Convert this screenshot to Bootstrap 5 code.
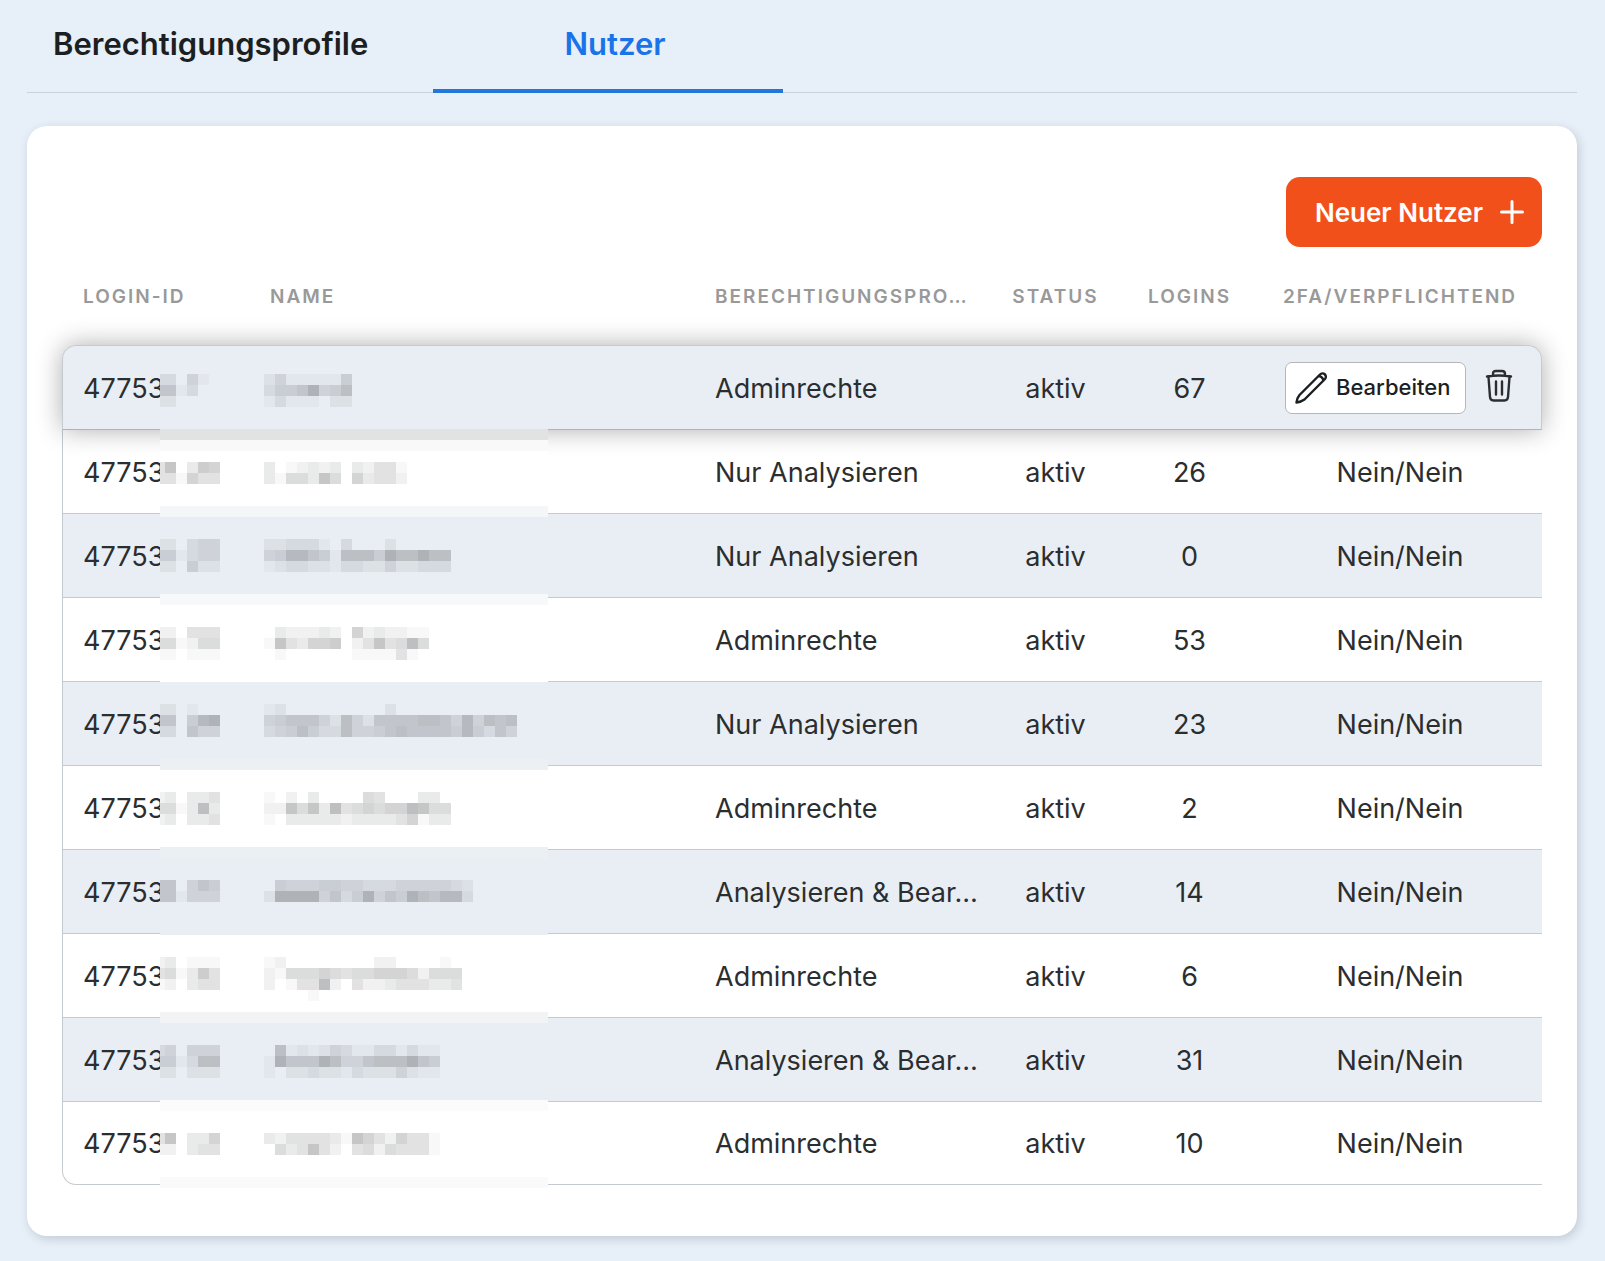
<!DOCTYPE html>
<html lang="de">
<head>
<meta charset="utf-8">
<meta name="viewport" content="width=device-width, initial-scale=1">
<title>Nutzer</title>
<link href="https://cdn.jsdelivr.net/npm/bootstrap@5.3.0/dist/css/bootstrap.min.css" rel="stylesheet">
<style>
  body { background: #e7eff8; color: #2b2e30; font-family: Inter, "Liberation Sans", sans-serif; font-size: 27px; }
  .page-shell { padding: 0 28px 24px 27px; }
  .profile-tabs { height: 93px; border-bottom: 1px solid #c9d1da; margin-bottom: 33px; }
  .profile-tabs .nav-link { height: 93px; padding: 20px 0 0; font-size: 31px; line-height: 48px; font-weight: 600; color: #1c1f21; border-bottom: 4px solid transparent; border-radius: 0; }
  .profile-tabs .nav-link.active { color: #1a73e8; border-bottom-color: #2376dc; }
  .tab-wide { width: 406px; }
  .profile-tabs .tab-wide .nav-link { padding-left: 26px; }
  .tab-user { width: 350px; }
  .profile-tabs .tab-user .nav-link { padding-left: 14px; }
  .user-panel { border: 0; border-radius: 20px; padding: 51px 35px; box-shadow: 2px 3px 10px rgba(60, 80, 100, .22); }
  .btn-create { height: 70px; padding: 0 16px 0 28px; border-radius: 14px; background: #f2501b; color: #fff; font-size: 26px; font-weight: 600; }
  .btn-create:hover { background: #dc4514; color: #fff; }
  .user-grid { table-layout: fixed; border-collapse: separate; border-spacing: 0; }
  .user-grid th { height: 98px; padding: 2px 16px 0; vertical-align: middle; font-size: 19px; font-weight: 600; letter-spacing: 2px; color: #999; }
  .user-grid td { height: 84px; padding: 3px 16px 0; border-bottom: 1px solid #c4cacf; vertical-align: middle; }
  .user-grid .cell-start { padding-left: 22px; padding-right: 22px; }
  .user-grid td.cell-start { padding-right: 0; }
  .user-grid th:first-child { padding-left: 21px; }
  .user-grid td:first-child { border-left: 1px solid #c4cacf; padding-left: 20px; }
  .user-grid tbody tr:nth-child(odd) td { background: #e9eef4; }
  .row-raised { position: relative; z-index: 1; border-radius: 14px 14px 0 0; box-shadow: 0 0 26px rgba(0, 0, 0, .32); }
  .user-grid .row-raised td { border-top: 1px solid #c4cacf; border-bottom-color: #adb3b6; height: 85px; }
  .row-raised td:first-child { border-top-left-radius: 14px; position: relative; }
  .user-grid .row-raised td:last-child { border-top-right-radius: 14px; border-right: 1px solid #c4cacf; padding: 0 27px; }
  .user-grid tbody tr:last-child td { height: 83px; }
  .user-grid tbody tr:last-child td:first-child { border-bottom-left-radius: 14px; }
  .redaction { position: absolute; left: 97px; top: 0; pointer-events: none; }
  .btn-edit { height: 52px; padding: 0 15px 0 8px; background: #fff; border: 1px solid #b3b7ba; border-radius: 7px; font-size: 22px; font-weight: 500; color: #1c1f21; }
  .w-login { width: 186px; } .w-profile { width: 297px; } .w-status { width: 131px; } .w-logins { width: 137px; } .w-twofa { width: 284px; }
</style>
<script src="https://cdn.jsdelivr.net/npm/bootstrap@5.3.0/dist/js/bootstrap.bundle.min.js"></script>
</head>
<body>
<div class="page-shell">
  <ul class="nav profile-tabs">
    <li class="nav-item tab-wide"><a class="nav-link" href="#profile">Berechtigungsprofile</a></li>
    <li class="nav-item tab-user"><a class="nav-link active text-center" aria-current="page" href="#nutzer">Nutzer</a></li>
  </ul>
  <main class="card user-panel">
    <div class="d-flex justify-content-end">
      <button type="button" class="btn btn-create d-flex align-items-center gap-3">Neuer Nutzer
        <svg width="26" height="26" viewBox="0 0 26 26" fill="none" stroke="#fff" stroke-width="3" stroke-linecap="round" aria-hidden="true"><path d="M13 2.500v21M2.500 13h21"/></svg>
      </button>
    </div>
    <table class="user-grid w-100">
      <colgroup><col class="w-login"><col><col class="w-profile"><col class="w-status"><col class="w-logins"><col class="w-twofa"></colgroup>
      <thead>
        <tr>
          <th scope="col" class="cell-start text-nowrap">LOGIN-ID</th>
          <th scope="col" class="cell-start">NAME</th>
          <th scope="col" class="cell-start text-nowrap">BERECHTIGUNGSPRO…</th>
          <th scope="col" class="text-center text-nowrap">STATUS</th>
          <th scope="col" class="text-center text-nowrap">LOGINS</th>
          <th scope="col" class="text-center text-nowrap">2FA/VERPFLICHTEND</th>
        </tr>
      </thead>
      <tbody>
        <tr class="row-raised">
          <td class="cell-start">47753<svg class="redaction" id="redaction" width="388" height="842" viewBox="160 346 388 842" shape-rendering="crispEdges" aria-hidden="true"></svg></td>
          <td></td><td class="cell-start text-nowrap">Adminrechte</td><td class="text-center">aktiv</td><td class="text-center">67</td>
          <td>
            <div class="d-flex align-items-center justify-content-between">
              <button type="button" class="btn btn-edit d-flex align-items-center gap-2">
                <svg width="34" height="34" viewBox="0 0 34 34" fill="none" stroke="#1c1f21" stroke-width="2.400" stroke-linejoin="round" stroke-linecap="round" aria-hidden="true"><path d="M2.500 31.500q.5-4.500 3-7.500L26 3.500a3.300 3.300 0 0 1 5 4.500L10.500 28.500q-3.500 2.500-8 3zM24.500 5q4 .5 5 4.500"/></svg>
                Bearbeiten
              </button>
              <button type="button" class="btn p-0 pb-1 border-0 d-flex" aria-label="Löschen">
                <svg width="30" height="34" viewBox="0 0 30 34" fill="none" stroke="#2b2e30" stroke-width="2.400" stroke-linecap="round" stroke-linejoin="round" aria-hidden="true"><path d="M3 7.500q12-2 24 0M9 6.500V5q0-3 3-3h6q3 0 3 3v1.500M4.500 8l1.500 20q.3 3.500 3.500 3.500h11q3.200 0 3.500-3.500L25.500 8M12 12.500v13M18 12.500v13"/></svg>
              </button>
            </div>
          </td>
        </tr>
        <tr><td class="cell-start">47753</td><td></td><td class="cell-start text-nowrap">Nur Analysieren</td><td class="text-center">aktiv</td><td class="text-center">26</td><td class="text-center">Nein/Nein</td></tr>
        <tr><td class="cell-start">47753</td><td></td><td class="cell-start text-nowrap">Nur Analysieren</td><td class="text-center">aktiv</td><td class="text-center">0</td><td class="text-center">Nein/Nein</td></tr>
        <tr><td class="cell-start">47753</td><td></td><td class="cell-start text-nowrap">Adminrechte</td><td class="text-center">aktiv</td><td class="text-center">53</td><td class="text-center">Nein/Nein</td></tr>
        <tr><td class="cell-start">47753</td><td></td><td class="cell-start text-nowrap">Nur Analysieren</td><td class="text-center">aktiv</td><td class="text-center">23</td><td class="text-center">Nein/Nein</td></tr>
        <tr><td class="cell-start">47753</td><td></td><td class="cell-start text-nowrap">Adminrechte</td><td class="text-center">aktiv</td><td class="text-center">2</td><td class="text-center">Nein/Nein</td></tr>
        <tr><td class="cell-start">47753</td><td></td><td class="cell-start text-nowrap">Analysieren &amp; Bear…</td><td class="text-center">aktiv</td><td class="text-center">14</td><td class="text-center">Nein/Nein</td></tr>
        <tr><td class="cell-start">47753</td><td></td><td class="cell-start text-nowrap">Adminrechte</td><td class="text-center">aktiv</td><td class="text-center">6</td><td class="text-center">Nein/Nein</td></tr>
        <tr><td class="cell-start">47753</td><td></td><td class="cell-start text-nowrap">Analysieren &amp; Bear…</td><td class="text-center">aktiv</td><td class="text-center">31</td><td class="text-center">Nein/Nein</td></tr>
        <tr><td class="cell-start">47753</td><td></td><td class="cell-start text-nowrap">Adminrechte</td><td class="text-center">aktiv</td><td class="text-center">10</td><td class="text-center">Nein/Nein</td></tr>
      </tbody>
    </table>
  </main>
</div>
<script>
  // Pixelated mask over login suffixes and names: background bands, then 11px blocks.
  const svg = document.getElementById('redaction');
  const rect = (x, y, w, h, fill, alpha) => {
    const r = document.createElementNS('http://www.w3.org/2000/svg', 'rect');
    Object.entries({ x, y, width: w, height: h, fill, 'fill-opacity': alpha }).forEach(([k, v]) => r.setAttribute(k, v));
    svg.appendChild(r);
  };
  const tint = '#e9eef4', white = '#fff';
  const bands = [[346, tint], [429, '#e1e2e2'], [440, '#f9f9f9'], [451, white], [506, '#f4f6f8'], [517, tint], [594, '#f6f8f9'], [605, white],
    [682, tint], [759, '#ecf0f2'], [770, white], [847, '#ebf0f2'], [858, tint], [935, white], [1012, '#f1f3f5'], [1023, tint],
    [1100, '#fbfbfc'], [1111, white], [1177, '#fafafb'], [1188, white]];
  bands.slice(0, -1).forEach(([y, fill], i) => rect(160, y, 388, bands[i + 1][0] - y, fill, 1));
  // [top, [login blocks, name blocks] per line]; digits are darkness levels
  const rows = [
    [374, ['330410', '24111115'], ['661300', '35569457'], ['220000', '13111022']],
    [462, ['480376', '3012323032441'], ['441644', '3155385063442']],
    [539, ['220344', '22333103000200000'], ['551344', '45886517775977977'], ['220522', '12332213322422333']],
    [627, ['220444', '032223206232211'], ['551255', '184366702484595'], ['110111', '010000001111410']],
    [704, ['220100', '12000000000200'], ['660589', '45666427426666776484767'], ['330644', '34575337445676666585364']],
    [792, ['230334', '10203000054000330'], ['551393', '22858394565669855'], ['230334', '10333332333346133']],
    [880, ['660465', '0544455443334444432'], ['661444', '2999946359465976883']],
    [957, ['230111', '120000000022000010'], ['451374', '215556545566652555'], ['120344', '201449204223444334'], ['000000', '00001']],
    [1045, ['340444', '0712124311331311'], ['551377', '1966697446777965'], ['220222', '1022322132224211']],
    [1133, ['480336', '3244443186426441'], ['220344', '0534842045254441']]
  ];
  rows.forEach(([top, ...lines]) => lines.forEach((parts, n) => parts.forEach((part, p) =>
    [...part].forEach((d, i) => { if (+d) rect((p ? 264 : 154) + i * 11, top + n * 11, 11, 11, '#2c2e30', d * .034); }))));
</script>
</body>
</html>
